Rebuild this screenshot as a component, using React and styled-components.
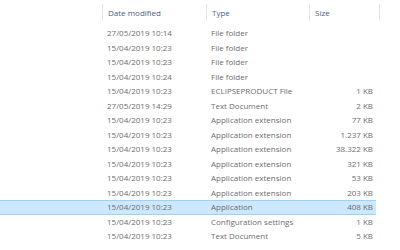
import React from "react";
import styled, { createGlobalStyle } from "styled-components";

const Global = createGlobalStyle`
  html, body { margin: 0; padding: 0; background: #ffffff; }
  body { font-family: "Open Sans", "Noto Sans", sans-serif; }
`;

const Wrap = styled.div`
  width: 400px;
  height: 250px;
  overflow: hidden;
  background: #fff;
`;

const cols = "102px 104px 103px 70px 1fr";

const Header = styled.div`
  display: grid;
  grid-template-columns: ${cols};
  height: 26px;
  align-items: center;
`;

const HeadCell = styled.div`
  height: 17px;
  margin-top: -1px;
  display: flex;
  align-items: center;
  padding-left: 5px;
  border-left: ${(p) => (p.$sep ? "1px solid #e5e5e5" : "none")};
  font-size: 8px;
  color: #4c607a;
  white-space: nowrap;
`;

const Row = styled.div`
  display: grid;
  grid-template-columns: 102px 104px 103px 67px;
  width: 376px;
  height: 14.5px;
  box-sizing: border-box;
  align-items: center;
  background: ${(p) => (p.$selected ? "#cce8ff" : "transparent")};
  border-top: 1px solid ${(p) => (p.$selected ? "#99d1ff" : "transparent")};
  border-bottom: 1px solid ${(p) => (p.$selected ? "#99d1ff" : "transparent")};
  font-size: 8px;
  color: #6d6d6d;
`;

const Cell = styled.div`
  padding-left: ${(p) => (p.$right ? "0" : "5px")};
  padding-right: ${(p) => (p.$right ? "3px" : "0")};
  text-align: ${(p) => (p.$right ? "right" : "left")};
  white-space: nowrap;
  overflow: hidden;
  line-height: 12px;
`;

const data = [
  ["27/05/2019 10:14", "File folder", ""],
  ["15/04/2019 10:23", "File folder", ""],
  ["15/04/2019 10:23", "File folder", ""],
  ["15/04/2019 10:24", "File folder", ""],
  ["15/04/2019 10:23", "ECLIPSEPRODUCT File", "1 KB"],
  ["27/05/2019 14:29", "Text Document", "2 KB"],
  ["15/04/2019 10:23", "Application extension", "77 KB"],
  ["15/04/2019 10:23", "Application extension", "1.237 KB"],
  ["15/04/2019 10:23", "Application extension", "38.322 KB"],
  ["15/04/2019 10:23", "Application extension", "321 KB"],
  ["15/04/2019 10:23", "Application extension", "53 KB"],
  ["15/04/2019 10:23", "Application extension", "203 KB"],
  ["15/04/2019 10:23", "Application", "408 KB"],
  ["15/04/2019 10:23", "Configuration settings", "1 KB"],
  ["15/04/2019 10:23", "Text Document", "5 KB"],
];

export default function App() {
  return (
    <Wrap>
      <Global />
      <Header>
        <HeadCell />
        <HeadCell $sep>Date modified</HeadCell>
        <HeadCell $sep>Type</HeadCell>
        <HeadCell $sep>Size</HeadCell>
        <HeadCell $sep />
      </Header>
      {data.map(([d, t, s], i) => (
        <Row key={i} $selected={i === 12}>
          <Cell />
          <Cell>{d}</Cell>
          <Cell>{t}</Cell>
          <Cell $right>{s}</Cell>
        </Row>
      ))}
    </Wrap>
  );
}
